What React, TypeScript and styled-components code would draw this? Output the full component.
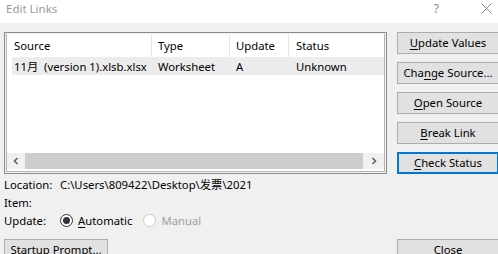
import styled, { createGlobalStyle, css } from "styled-components";

const GlobalStyle = createGlobalStyle`
  body {
    margin: 0;
    background: #f0f0f0;
    font-family: "Noto Sans", "Open Sans", "Noto Sans CJK SC", sans-serif;
    font-size: 11.3px;
    color: #000;
  }
`;

const Window = styled.div`
  width: 498px;
  height: 254px;
  overflow: hidden;
  background: #f0f0f0;
`;

const TitleBar = styled.div`
  height: 23px;
  background: #fff;
  display: flex;
  align-items: center;
  justify-content: space-between;
  padding-left: 6px;
`;

const Title = styled.div`
  color: #9a9a9a;
  font-size: 11.5px;
  line-height: 16px;
  margin-top: -6px;
`;

const TitleControls = styled.div`
  display: flex;
  align-items: center;
  gap: 42px;
  margin-top: -6px;
  margin-right: 6px;
  color: #888;
`;

const HelpGlyph = styled.span`
  font-size: 12px;
`;

const Body = styled.div`
  display: grid;
  grid-template-columns: 383px 102px;
  column-gap: 10px;
  padding: 9px 0 0 4px;
`;

const ListBox = styled.div`
  height: 142px;
  box-sizing: border-box;
  border: 1px solid #8c8c8c;
  padding: 1px;
  display: flex;
`;

const ListInner = styled.div`
  flex: 1;
  background: #fff;
  border: 1px solid #b4b4b4;
  border-top: none;
  display: flex;
  flex-direction: column;
`;

const HeaderRow = styled.div`
  display: flex;
  height: 23px;
  align-items: center;
`;

const HeaderCell = styled.div<{ $w?: number; $pad: number; $divider?: boolean }>`
  width: ${(p) => (p.$w ? `${p.$w}px` : "auto")};
  flex: ${(p) => (p.$w ? "none" : "1")};
  box-sizing: border-box;
  padding-left: ${(p) => p.$pad}px;
  height: 23px;
  line-height: 23px;
  border-right: ${(p) => (p.$divider ? "1px solid #e5e5e5" : "none")};
`;

const DataRow = styled.div`
  display: flex;
  height: 18px;
  align-items: center;
  margin-left: 5px;
  background: #ececec;
`;

const DataCell = styled.div<{ $w?: number; $pad: number }>`
  width: ${(p) => (p.$w ? `${p.$w}px` : "auto")};
  flex: ${(p) => (p.$w ? "none" : "1")};
  box-sizing: border-box;
  padding-left: ${(p) => p.$pad}px;
  white-space: pre;
`;

const ListSpacer = styled.div`
  flex: 1;
`;

const ScrollBar = styled.div`
  height: 16px;
  margin-bottom: 2px;
  display: flex;
  background: #f0f0f0;
`;

const ScrollArrow = styled.div<{ $w: number }>`
  width: ${(p) => p.$w}px;
  display: flex;
  align-items: center;
  justify-content: center;
`;

const ScrollThumb = styled.div`
  flex: 1;
  background: #cdcdcd;
`;

const ButtonStack = styled.div`
  display: flex;
  flex-direction: column;
  gap: 8px;
`;

const Button = styled.div<{ $focused?: boolean }>`
  height: 22px;
  box-sizing: border-box;
  padding-bottom: 2px;
  background: #e1e1e1;
  border: 1px solid #adadad;
  display: flex;
  align-items: center;
  justify-content: center;
  white-space: nowrap;
  ${(p) =>
    p.$focused &&
    css`
      border: 2px solid #0078d7;
    `}
`;

const Mnemonic = styled.span`
  text-decoration: underline;
  text-underline-offset: 2px;
`;

const Info = styled.div`
  display: grid;
  grid-template-columns: 56px 1fr;
  grid-template-rows: 18px 19px 17px;
  align-items: center;
  margin-top: 1px;
`;

const Label = styled.div``;

const Value = styled.div`
  display: flex;
  align-items: center;
`;

const RadioOption = styled.div<{ $disabled?: boolean }>`
  display: flex;
  align-items: center;
  gap: 5px;
  margin-right: 11px;
  color: ${(p) => (p.$disabled ? "#a0a0a0" : "#000")};
`;

const RadioCircle = styled.span<{ $checked?: boolean; $disabled?: boolean }>`
  width: 13px;
  height: 13px;
  box-sizing: border-box;
  border-radius: 50%;
  border: 1px solid ${(p) => (p.$disabled ? "#cccccc" : "#333")};
  background: #fff;
  display: flex;
  align-items: center;
  justify-content: center;
  &::after {
    content: "";
    width: 7px;
    height: 7px;
    border-radius: 50%;
    background: ${(p) => (p.$checked ? "#333" : "transparent")};
  }
`;

const BottomLeft = styled.div`
  margin-top: 10px;
  display: flex;
`;

const WideButton = styled(Button)`
  width: 104px;
`;

const BottomRight = styled.div`
  margin-top: 10px;
`;

const Arrow = ({ dir }: { dir: "left" | "right" }) => (
  <svg width="8" height="8" viewBox="0 0 8 8">
    <path
      d={dir === "left" ? "M5.5 1 L2.5 4 L5.5 7" : "M2.5 1 L5.5 4 L2.5 7"}
      fill="none"
      stroke="#606060"
      strokeWidth="1.6"
    />
  </svg>
);

const CloseX = () => (
  <svg width="11" height="11" viewBox="0 0 11 11">
    <path d="M0.5 0.5 L10.5 10.5 M10.5 0.5 L0.5 10.5" stroke="#888" strokeWidth="1" />
  </svg>
);

export default function App() {
  return (
    <Window>
      <GlobalStyle />
      <TitleBar>
        <Title>Edit Links</Title>
        <TitleControls>
          <HelpGlyph>?</HelpGlyph>
          <CloseX />
        </TitleControls>
      </TitleBar>
      <Body>
        <ListBox>
          <ListInner>
            <HeaderRow>
              <HeaderCell $w={145} $pad={7} $divider>
                Source
              </HeaderCell>
              <HeaderCell $w={78} $pad={6} $divider>
                Type
              </HeaderCell>
              <HeaderCell $w={59} $pad={6} $divider>
                Update
              </HeaderCell>
              <HeaderCell $pad={7}>Status</HeaderCell>
            </HeaderRow>
            <DataRow>
              <DataCell $w={140} $pad={2}>
                11月  (version 1).xlsb.xlsx
              </DataCell>
              <DataCell $w={78} $pad={6}>
                Worksheet
              </DataCell>
              <DataCell $w={59} $pad={6}>
                A
              </DataCell>
              <DataCell $pad={7}>Unknown</DataCell>
            </DataRow>
            <ListSpacer />
            <ScrollBar>
              <ScrollArrow $w={18}>
                <Arrow dir="left" />
              </ScrollArrow>
              <ScrollThumb />
              <ScrollArrow $w={21}>
                <Arrow dir="right" />
              </ScrollArrow>
            </ScrollBar>
          </ListInner>
        </ListBox>
        <ButtonStack>
          <Button>
            <Mnemonic>U</Mnemonic>pdate Values
          </Button>
          <Button>
            Cha<Mnemonic>n</Mnemonic>ge Source...
          </Button>
          <Button>
            <Mnemonic>O</Mnemonic>pen Source
          </Button>
          <Button>
            <Mnemonic>B</Mnemonic>reak Link
          </Button>
          <Button $focused>
            <Mnemonic>C</Mnemonic>heck Status
          </Button>
        </ButtonStack>
        <Info>
          <Label>Location:</Label>
          <Value>C:\Users\809422\Desktop\发票\2021</Value>
          <Label>Item:</Label>
          <Value />
          <Label>Update:</Label>
          <Value>
            <RadioOption>
              <RadioCircle $checked />
              <span>
                <Mnemonic>A</Mnemonic>utomatic
              </span>
            </RadioOption>
            <RadioOption $disabled>
              <RadioCircle $disabled />
              <span>Manual</span>
            </RadioOption>
          </Value>
        </Info>
        <div />
        <BottomLeft>
          <WideButton>Startup Prompt...</WideButton>
        </BottomLeft>
        <BottomRight>
          <Button>Close</Button>
        </BottomRight>
      </Body>
    </Window>
  );
}
